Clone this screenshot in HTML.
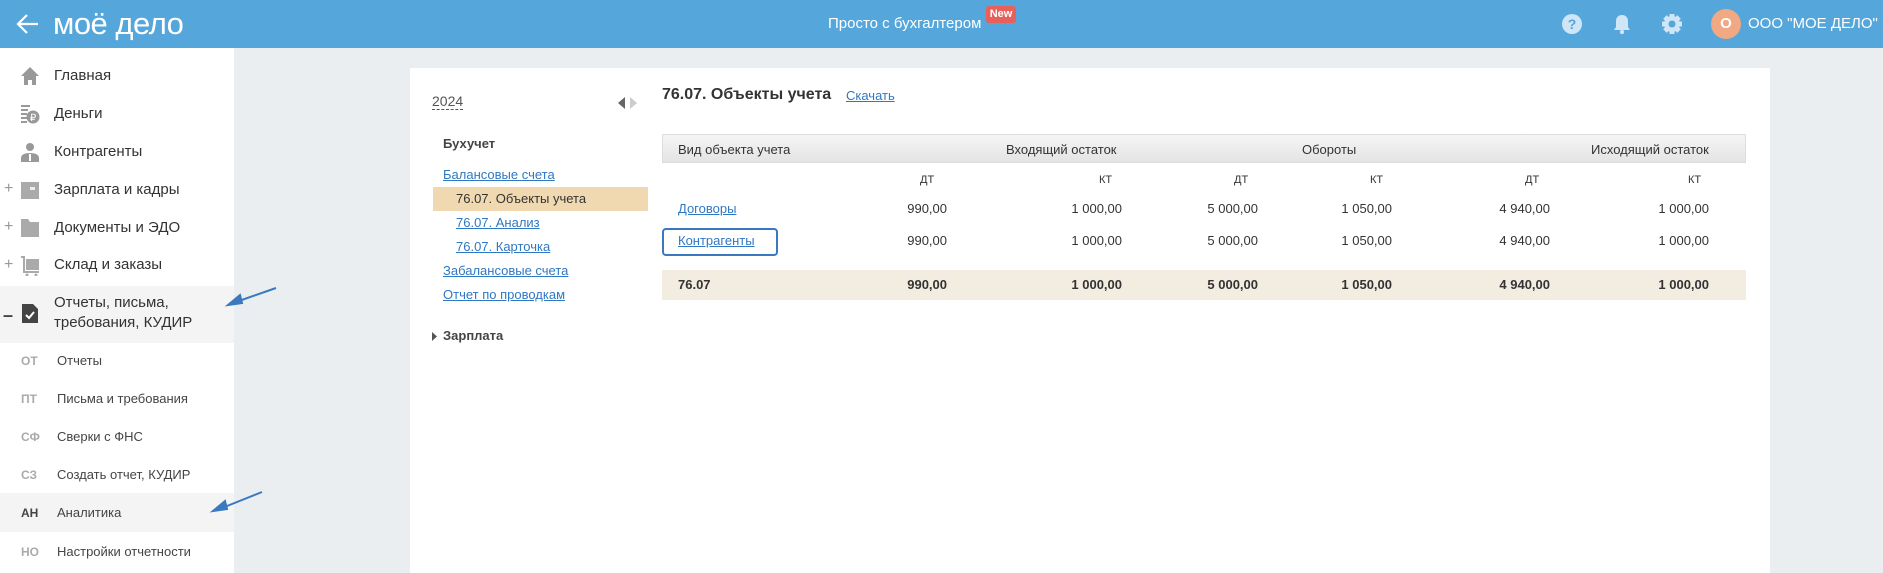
<!DOCTYPE html>
<html><head><meta charset="utf-8"><style>
*{margin:0;padding:0;box-sizing:border-box}
body{width:1883px;height:573px;overflow:hidden;background:#ebeef1;font-family:"Liberation Sans",Arial,sans-serif;position:relative;color:#333}
.a{position:absolute;white-space:nowrap}
.hdr{position:absolute;left:0;top:0;width:1883px;height:48px;background:#54a6db}
.side{position:absolute;left:0;top:48px;width:234px;height:525px;background:#fff}
.si{font-size:15px;color:#333}
.ab{font-size:12px;font-weight:bold;color:#aaa}
.sub{font-size:13px;color:#444}
.ico{position:absolute;left:20px;width:20px;height:20px}
.pl{font-size:16px;color:#999}
.card{position:absolute;left:410px;top:68px;width:1360px;height:505px;background:#fff}
a,.lnk{color:#2f78c3;text-decoration:underline}
.t{font-size:13px;color:#333}
.r{text-align:right}
</style></head><body>
<div class="hdr"></div>
<svg class="a" style="left:16px;top:13px" width="24" height="22" viewBox="0 0 24 22"><path d="M22 11H3M11 2L2 11l9 9" stroke="#fff" stroke-width="2.2" fill="none"/></svg>
<div class="a" style="left:53px;top:6px;font-size:31px;color:#fff;letter-spacing:-0.5px">моё дело</div>
<div class="a" style="left:828px;top:15px;font-size:15px;color:#fff">Просто с бухгалтером</div>
<div class="a" style="left:986px;top:6px;width:30px;height:17px;background:#e8605a;border-radius:3px;color:#fff;font-size:11px;font-weight:bold;text-align:center;line-height:17px">New</div>
<svg class="a" style="left:1561px;top:13px" width="22" height="22" viewBox="0 0 22 22"><circle cx="11" cy="11" r="10" fill="#cfe6f7"/><text x="11" y="16" font-size="14" font-weight="bold" fill="#54a6db" text-anchor="middle" font-family="Liberation Sans">?</text></svg>
<svg class="a" style="left:1612px;top:13px" width="20" height="22" viewBox="0 0 20 22"><path d="M10 2c-4 0-6 3-6 6v6l-2 3h16l-2-3V8c0-3-2-6-6-6z" fill="#cfe6f7"/><circle cx="10" cy="19" r="2.2" fill="#cfe6f7"/></svg>
<svg class="a" style="left:1661px;top:13px" width="22" height="22" viewBox="0 0 22 22"><g fill="#cfe6f7"><circle cx="11" cy="11" r="8"/><rect x="8.5" y="1" width="5" height="20"/><rect x="1" y="8.5" width="20" height="5"/><rect x="8.5" y="1" width="5" height="20" transform="rotate(45 11 11)"/><rect x="8.5" y="1" width="5" height="20" transform="rotate(-45 11 11)"/></g><circle cx="11" cy="11" r="3.5" fill="#54a6db"/></svg>
<div class="a" style="left:1711px;top:9px;width:30px;height:30px;border-radius:50%;background:#f0a982;color:#fff;font-weight:bold;font-size:15px;text-align:center;line-height:30px">О</div>
<div class="a" style="left:1748px;top:15px;font-size:15px;color:#fff">ООО "МОЕ ДЕЛО"</div>

<div class="side"></div>
<div class="a" style="left:0;top:286px;width:234px;height:57px;background:#f4f4f4"></div>
<div class="a" style="left:0;top:493px;width:234px;height:39px;background:#f4f4f4"></div>
<svg class="ico" style="top:66px" viewBox="0 0 20 20"><path d="M10 1L1 10h3v9h4v-5h4v5h4v-9h3z" fill="#999"/></svg>
<svg class="ico" style="top:104px" viewBox="0 0 20 20"><g fill="#999"><rect x="1" y="1" width="9" height="2"/><rect x="1" y="5" width="7" height="2"/><rect x="1" y="9" width="6" height="2"/><rect x="1" y="13" width="6" height="2"/><rect x="1" y="17" width="6" height="2"/><circle cx="13" cy="13" r="6.5"/></g><text x="13" y="17" font-size="10" fill="#fff" text-anchor="middle" font-family="Liberation Sans">₽</text></svg>
<svg class="ico" style="top:142px" viewBox="0 0 20 20"><g fill="#999"><circle cx="10" cy="5" r="4"/><path d="M1 20v-4c0-3 3-5 9-5s9 2 9 5v4z"/></g><path d="M10 12v7" stroke="#fff" stroke-width="2"/></svg>
<svg class="ico" style="top:180px" viewBox="0 0 20 20"><rect x="1" y="2" width="18" height="17" fill="#aaa"/><rect x="10" y="7" width="5" height="3" fill="#eee"/></svg>
<svg class="ico" style="top:218px" viewBox="0 0 20 20"><path d="M1 1h7l2 3h9v15H1z" fill="#aaa"/></svg>
<svg class="ico" style="top:256px" viewBox="0 0 20 20"><path d="M1 1h3v15h15" stroke="#aaa" stroke-width="2" fill="none"/><rect x="6" y="3" width="13" height="11" fill="#aaa"/><circle cx="7" cy="19" r="1.5" fill="#aaa"/><circle cx="16" cy="19" r="1.5" fill="#aaa"/></svg>
<svg class="ico" style="top:303px" viewBox="0 0 20 20"><path d="M2 1h11l5 5v14H2z" fill="#444"/><path d="M6 12l3 3 5-6" stroke="#fff" stroke-width="2" fill="none"/></svg>
<div class="a pl" style="left:4px;top:180px">+</div>
<div class="a pl" style="left:4px;top:218px">+</div>
<div class="a pl" style="left:4px;top:256px">+</div>
<div class="a" style="left:3px;top:305px;font-size:18px;color:#444;font-weight:bold">–</div>
<div class="a si" style="left:54px;top:67px">Главная</div>
<div class="a si" style="left:54px;top:105px">Деньги</div>
<div class="a si" style="left:54px;top:143px">Контрагенты</div>
<div class="a si" style="left:54px;top:181px">Зарплата и кадры</div>
<div class="a si" style="left:54px;top:219px">Документы и ЭДО</div>
<div class="a si" style="left:54px;top:256px">Склад и заказы</div>
<div class="a si" style="left:54px;top:293px;line-height:20px">Отчеты, письма,<br>требования, КУДИР</div>
<div class="a ab" style="left:21px;top:354px">ОТ</div><div class="a sub" style="left:57px;top:353px">Отчеты</div>
<div class="a ab" style="left:21px;top:392px">ПТ</div><div class="a sub" style="left:57px;top:391px">Письма и требования</div>
<div class="a ab" style="left:21px;top:430px">СФ</div><div class="a sub" style="left:57px;top:429px">Сверки с ФНС</div>
<div class="a ab" style="left:21px;top:468px">СЗ</div><div class="a sub" style="left:57px;top:467px">Создать отчет, КУДИР</div>
<div class="a ab" style="left:21px;top:506px;color:#444">АН</div><div class="a sub" style="left:57px;top:505px">Аналитика</div>
<div class="a ab" style="left:21px;top:545px">НО</div><div class="a sub" style="left:57px;top:544px">Настройки отчетности</div>
<svg class="a" style="left:0;top:0" width="300" height="573" viewBox="0 0 300 573"><g stroke="#3a78c0" stroke-width="2" fill="#3a78c0"><path d="M276 288L236 302"/><path d="M228 305l12-10 2 8z"/><path d="M262 492L222 508"/><path d="M213 511l12-10 2 8z"/></g></svg>

<div class="card"></div>
<div class="a" style="left:432px;top:93px;font-size:14px;color:#555;border-bottom:1px dashed #555;line-height:16px">2024</div>
<svg class="a" style="left:617px;top:97px" width="22" height="12"><path d="M8 0v12L1 6z" fill="#666"/><path d="M13 0v12l7-6z" fill="#ccc"/></svg>
<div class="a" style="left:443px;top:136px;font-size:13px;font-weight:bold;color:#444">Бухучет</div>
<div class="a lnk" style="left:443px;top:167px;font-size:13px">Балансовые счета</div>
<div class="a" style="left:433px;top:187px;width:215px;height:24px;background:#f0d9b0"></div>
<div class="a" style="left:456px;top:191px;font-size:13px;color:#333">76.07. Объекты учета</div>
<div class="a lnk" style="left:456px;top:215px;font-size:13px">76.07. Анализ</div>
<div class="a lnk" style="left:456px;top:239px;font-size:13px">76.07. Карточка</div>
<div class="a lnk" style="left:443px;top:263px;font-size:13px">Забалансовые счета</div>
<div class="a lnk" style="left:443px;top:287px;font-size:13px">Отчет по проводкам</div>
<svg class="a" style="left:432px;top:332px" width="6" height="9"><path d="M0 0l5 4.5L0 9z" fill="#555"/></svg>
<div class="a" style="left:443px;top:328px;font-size:13px;font-weight:bold;color:#444">Зарплата</div>

<div class="a" style="left:662px;top:86px;font-size:16px;font-weight:bold;color:#333">76.07. Объекты учета</div>
<div class="a lnk" style="left:846px;top:88px;font-size:13px">Скачать</div>
<div class="a" style="left:662px;top:134px;width:1084px;height:29px;background:linear-gradient(#f5f5f5,#e4e4e4);border:1px solid #ddd"></div>
<div class="a t" style="left:678px;top:142px">Вид объекта учета</div>
<div class="a t" style="left:1006px;top:142px">Входящий остаток</div>
<div class="a t" style="left:1302px;top:142px">Обороты</div>
<div class="a t" style="left:1591px;top:142px">Исходящий остаток</div>
<div class="a" style="left:662px;top:270px;width:1084px;height:30px;background:#f3ece1"></div>
<div class="a" style="left:662px;top:228px;width:116px;height:28px;border:2px solid #3a78c0;border-radius:4px"></div>
<div class="a lnk t" style="left:678px;top:201px;color:#2f78c3">Договоры</div>
<div class="a lnk t" style="left:678px;top:233px;color:#2f78c3">Контрагенты</div>
<div class="a t" style="left:678px;top:277px;font-weight:bold">76.07</div>
<div class="a" style="left:0;top:0;font-size:11px;color:#333">
<span class="a" style="left:920px;top:174px">ДТ</span><span class="a" style="left:1099px;top:174px">КТ</span><span class="a" style="left:1234px;top:174px">ДТ</span><span class="a" style="left:1370px;top:174px">КТ</span><span class="a" style="left:1525px;top:174px">ДТ</span><span class="a" style="left:1688px;top:174px">КТ</span>
</div>
<div class="a t r" style="left:847px;top:201px;width:100px">990,00</div><div class="a t r" style="left:1022px;top:201px;width:100px">1 000,00</div><div class="a t r" style="left:1158px;top:201px;width:100px">5 000,00</div><div class="a t r" style="left:1292px;top:201px;width:100px">1 050,00</div><div class="a t r" style="left:1450px;top:201px;width:100px">4 940,00</div><div class="a t r" style="left:1609px;top:201px;width:100px">1 000,00</div>
<div class="a t r" style="left:847px;top:233px;width:100px">990,00</div><div class="a t r" style="left:1022px;top:233px;width:100px">1 000,00</div><div class="a t r" style="left:1158px;top:233px;width:100px">5 000,00</div><div class="a t r" style="left:1292px;top:233px;width:100px">1 050,00</div><div class="a t r" style="left:1450px;top:233px;width:100px">4 940,00</div><div class="a t r" style="left:1609px;top:233px;width:100px">1 000,00</div>
<div class="a t r" style="left:847px;top:277px;width:100px;font-weight:bold">990,00</div><div class="a t r" style="left:1022px;top:277px;width:100px;font-weight:bold">1 000,00</div><div class="a t r" style="left:1158px;top:277px;width:100px;font-weight:bold">5 000,00</div><div class="a t r" style="left:1292px;top:277px;width:100px;font-weight:bold">1 050,00</div><div class="a t r" style="left:1450px;top:277px;width:100px;font-weight:bold">4 940,00</div><div class="a t r" style="left:1609px;top:277px;width:100px;font-weight:bold">1 000,00</div>
</body></html>
